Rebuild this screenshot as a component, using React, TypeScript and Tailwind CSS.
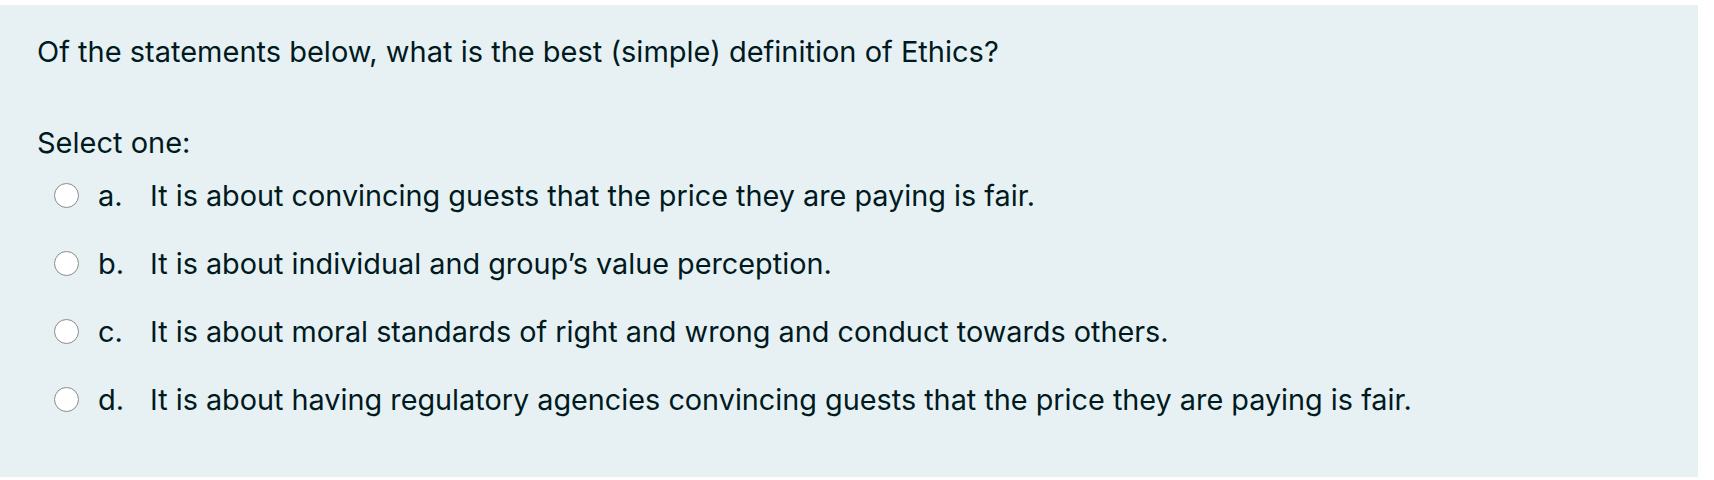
const options = [
  { letter: 'a.', text: 'It is about convincing guests that the price they are paying is fair.' },
  { letter: 'b.', text: 'It is about individual and group\u2019s value perception.' },
  { letter: 'c.', text: 'It is about moral standards of right and wrong and conduct towards others.' },
  { letter: 'd.', text: 'It is about having regulatory agencies convincing guests that the price they are paying is fair.' },
];

export default function App() {
  return (
    <div className="w-[1714px] h-[480px] bg-white pt-[5px] pr-[16px]" style={{ fontFamily: 'Inter, "Noto Sans", sans-serif' }}>
      <div className="h-[472px] bg-[#e7f1f4] text-[#001a1e] pl-[37px] pt-[27px] text-[29px]">
        <div className="h-[39px] leading-[39px]">Of the statements below, what is the best (simple) definition of Ethics?</div>
        <div className="mt-[52px] h-[39px] leading-[39px]">Select one:</div>
        <div className="flex flex-col mt-[14px] gap-[29px]">
          {options.map((o) => (
            <div key={o.letter} className="flex items-center h-[39px] leading-[39px]">
              <span className="ml-[17px] w-[25px] h-[25px] rounded-full border-[1.5px] border-[#8a8a8a] bg-white shrink-0" />
              <span className="ml-[19px] w-[52px]">{o.letter}</span>
              <span className="text-[28.8px]">{o.text}</span>
            </div>
          ))}
        </div>
      </div>
    </div>
  );
}
